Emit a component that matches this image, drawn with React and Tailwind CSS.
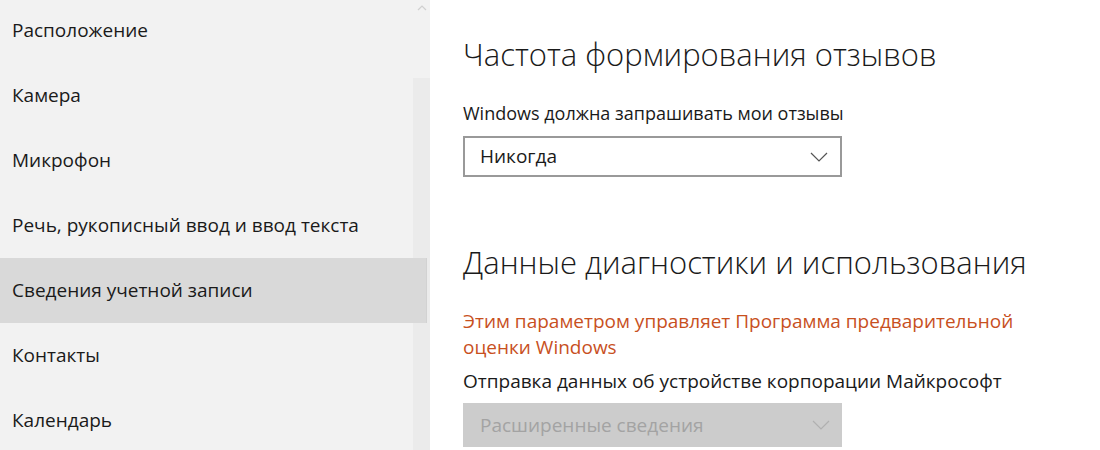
const items = [
  'Расположение',
  'Камера',
  'Микрофон',
  'Речь, рукописный ввод и ввод текста',
  'Сведения учетной записи',
  'Контакты',
  'Календарь',
]

function Chevron({ className }) {
  return (
    <svg className={className} width="18" height="10" viewBox="0 0 18 10" fill="none">
      <path d="M1 1l8 8 8-8" stroke="currentColor" strokeWidth="1.2" />
    </svg>
  )
}

export default function App() {
  return (
    <div className="w-[1100px] h-[450px] overflow-hidden flex bg-white text-[#1a1a1a] font-['Open_Sans',sans-serif]">
      <aside className="relative w-[430px] h-full bg-[#f2f2f2] shrink-0">
        {/* scrollbar */}
        <div className="absolute right-0 top-0 bottom-0 w-[17px] flex flex-col">
          <div className="h-[78px] flex justify-center pt-[5px]">
            <svg width="10" height="6" viewBox="0 0 10 6" fill="none">
              <path d="M1 5l4-4 4 4" stroke="#d0d0d0" strokeWidth="1.2" />
            </svg>
          </div>
          <div className="flex-1 bg-[#ebebeb]" />
        </div>
        <div className="relative -mt-[2px] pr-[17px]">
          {items.map((t, i) => (
            <div
              key={t}
              className={`h-[65px] flex items-center pl-[12px] text-[19px] ${i === 4 ? 'bg-[#d9d9d9] -mr-[14px] border-r border-[#d2d2d2]' : ''}`}
            >
              {t}
            </div>
          ))}
        </div>
      </aside>

      <main className="flex-1 pl-[33px] pt-[34px]">
        <h2 className="text-[31px] font-light leading-[40px]">Частота формирования отзывов</h2>
        <p className="mt-[27px] text-[18px] leading-[24px]">Windows должна запрашивать мои отзывы</p>
        <div className="mt-[11px] w-[379px] h-[41px] border-2 border-[#999999] flex items-center justify-between pl-[15px] pr-[12px] text-[19px]">
          <span>Никогда</span>
          <Chevron className="text-[#555]" />
        </div>

        <h2 className="mt-[65px] text-[31px] font-light leading-[40px]">Данные диагностики и использования</h2>
        <p className="mt-[26px] text-[19px] leading-[26px] text-[#c8501e] w-[580px]">
          Этим параметром управляет Программа предварительной оценки Windows
        </p>
        <p className="mt-[9px] text-[19px] leading-[24px]">Отправка данных об устройстве корпорации Майкрософт</p>
        <div className="mt-[10px] w-[379px] h-[44px] bg-[#cccccc] flex items-center justify-between pl-[17px] pr-[12px] text-[19px] text-[#a3a3a3]">
          <span>Расширенные сведения</span>
          <Chevron className="text-[#b0b0b0]" />
        </div>
      </main>
    </div>
  )
}
